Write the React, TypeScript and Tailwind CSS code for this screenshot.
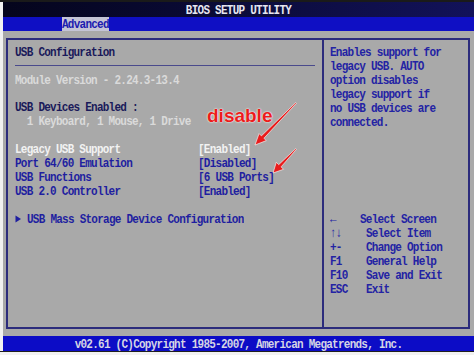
export default function App() {
	const mono = "font-['Liberation_Mono',monospace] font-bold text-[11px] tracking-[-0.75px] leading-[14px]"
	// the BIOS font is taller than it is wide
	const tall = 'inline-block scale-y-[1.2]'

	return (
		<div className="relative flex h-[355px] w-[474px] flex-col overflow-hidden bg-[#f2f2f2]">
			{/* Top strip + title */}
			<div className="h-[2px] bg-[#1a1a1a]" />
			<div className="ml-[3px] flex h-[15px] items-center justify-center bg-gradient-to-r from-[#05051c] via-[#0b0b3a] to-[#12125a]">
				<span className={`${mono} ${tall} text-[#e6e6f0]`}>BIOS SETUP UTILITY</span>
			</div>

			{/* Tab bar */}
			<div className="ml-[3px] flex h-[14px] items-stretch bg-[#0f0fc4] pl-[59px]">
				<span className={`${mono} flex w-[47px] items-center bg-[#c4c4d6] text-[#1c1cb0]`}>
					<span className={tall}>Advanced</span>
				</span>
			</div>

			{/* Main area */}
			<div className="ml-[3px] flex flex-1 bg-[#a9a9a9] pt-[7px] pr-[4px] pb-[7px] pl-[3px]">
				<div className="flex flex-1 border-2 border-[#2c2c7c]">
					{/* Left panel */}
					<div className={`${mono} flex w-[316px] flex-col border-r-2 border-[#2c2c7c] pt-[5px] pl-[7px] pr-[7px]`}>
						<div className="text-[#1a1a5a]"><span className={tall}>USB Configuration</span></div>
						<div className="mt-[6px] mb-[7px] h-[1px] bg-[#4a4a8c]" />
						<div className="text-[#dadada]"><span className={tall}>Module Version - 2.24.3-13.4</span></div>
						<div className="h-[13px]" />
						<div className="text-[#1a1a5a]"><span className={tall}>USB Devices Enabled :</span></div>
						<div className="whitespace-pre text-[#dadada]"><span className={tall}>  1 Keyboard, 1 Mouse, 1 Drive</span></div>
						<div className="h-[14px]" />
						<div className="grid grid-cols-[183px_1fr] *:inline-block *:origin-center *:scale-y-[1.2] *:justify-self-start">
							<span className="text-[#f2f2f2]">Legacy USB Support</span>
							<span className="text-[#f2f2f2]">[Enabled]</span>
							<span className="text-[#1f1fa0]">Port 64/60 Emulation</span>
							<span className="text-[#1f1fa0]">[Disabled]</span>
							<span className="text-[#1f1fa0]">USB Functions</span>
							<span className="text-[#1f1fa0]">[6 USB Ports]</span>
							<span className="text-[#1f1fa0]">USB 2.0 Controller</span>
							<span className="text-[#1f1fa0]">[Enabled]</span>
						</div>
						<div className="h-[14px]" />
						<div className="flex items-center text-[#1f1fa0]">
							<svg width="12" height="14" viewBox="0 0 12 14" className="shrink-0">
								<path d="M0.5 3.5 L6 7 L0.5 10.5 Z" fill="#1f1fa0" />
							</svg>
							<span className={tall}>USB Mass Storage Device Configuration</span>
						</div>
					</div>

					{/* Right panel */}
					<div className={`${mono} flex flex-1 flex-col pt-[5px] pl-[6px] text-[#2323a4]`}>
						<div className="flex flex-col *:inline-block *:scale-y-[1.2] *:self-start">
							<span>Enables support for</span>
							<span>legacy USB. AUTO</span>
							<span>option disables</span>
							<span>legacy support if</span>
							<span>no USB devices are</span>
							<span>connected.</span>
						</div>
						<div className="mt-[83px] grid grid-cols-[30px_1fr] *:inline-block *:scale-y-[1.2] *:justify-self-start">
							<span>←</span>
							<span>Select Screen</span>
							<span>↑↓</span>
							<span className="pl-[6px]">Select Item</span>
							<span>+-</span>
							<span className="pl-[6px]">Change Option</span>
							<span>F1</span>
							<span className="pl-[6px]">General Help</span>
							<span>F10</span>
							<span className="pl-[6px]">Save and Exit</span>
							<span>ESC</span>
							<span className="pl-[6px]">Exit</span>
						</div>
					</div>
				</div>
			</div>

			{/* Footer */}
			<div className="ml-[3px] flex h-[15px] items-center justify-center bg-[#0c0cc6]">
				<span className={`${mono} ${tall} whitespace-pre text-[#d4d4e4]`}>v02.61 (C)Copyright 1985-2007, American Megatrends, Inc.</span>
			</div>
			<div className="h-[1px] bg-[#202020]" />
			<div className="h-[3px]" />

			{/* Red annotation */}
			<span className="absolute top-[106px] left-[207px] font-['Liberation_Sans',sans-serif] text-[19px] leading-none font-bold text-[#ec1c1c] [text-shadow:0_0_2px_#fff,0_0_1px_#fff]">
				disable
			</span>
			<svg className="pointer-events-none absolute inset-0" width="474" height="355" viewBox="0 0 474 355">
				<polygon
					points="296.4,103.3 263.9,138.3 266.3,140.6 255,145 259.1,133.6 261.4,135.9 295.6,102.7"
					fill="#e81c1c"
					stroke="#ffffff"
					strokeWidth="0.6"
				/>
				<polygon
					points="296.4,149.3 281.1,166.9 283.5,169.3 273,173 276.3,162.3 278.7,164.7 295.6,148.7"
					fill="#e81c1c"
					stroke="#ffffff"
					strokeWidth="0.6"
				/>
			</svg>
		</div>
	)
}
